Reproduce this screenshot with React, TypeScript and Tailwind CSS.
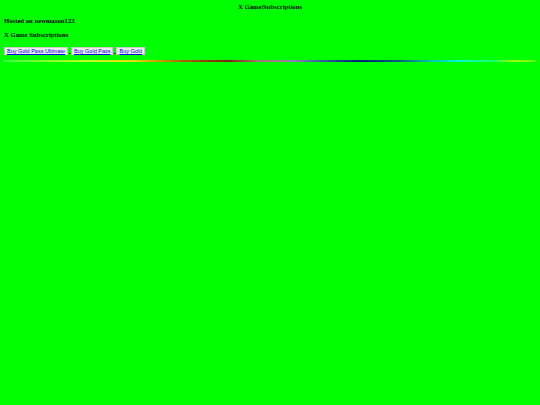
const buttons = ['Buy Gold Pass Ultimate', 'Buy Gold Pass', 'Buy Gold'];

const App = () => {
	return (
		<div className="min-h-[405px] w-full bg-[#00ff00] text-black" style={{ fontFamily: '"Liberation Serif", serif' }}>
			<div className="px-[4px] pt-[3px]">
				<h1 className="text-center text-[6.7px] font-bold leading-[8px]">X Game|Subscriptions</h1>
				<h2 className="mt-[6px] text-[6.7px] font-bold leading-[8px]">Hosted on newmason123</h2>
				<h2 className="mt-[6px] text-[6.7px] font-bold leading-[8px]">X Game Subscriptions</h2>
				<div className="mt-[8px] flex items-end" style={{ fontFamily: '"Liberation Sans", sans-serif' }}>
					{buttons.map((label, i) => (
						<div key={label} className="flex items-end">
							{i > 0 && <span className="mx-[0.5px] mb-[1px] h-[1px] w-[2px] bg-[#303030]" />}
							<button className="h-[8px] border-[0.5px] border-[#c8c8c8] bg-[#efefef] px-[2px] text-[5.5px] leading-[7px] text-[#0000ee] underline">
								{label}
							</button>
						</div>
					))}
				</div>
				<div
					className="mt-[5px] h-[1.5px] w-full"
					style={{
						background:
							'linear-gradient(to right, #40ff40 0%, #c0ff20 15%, #e8e000 24%, #b05a00 34%, #802010 42%, #a07a70 48%, #9080b0 54%, #306090 60%, #002070 67%, #006070 74%, #00c0a0 80%, #00ffd0 86%, #20ff60 92%, #a0ff00 96%, #60ff00 100%)',
					}}
				/>
			</div>
		</div>
	);
};

export default App;
